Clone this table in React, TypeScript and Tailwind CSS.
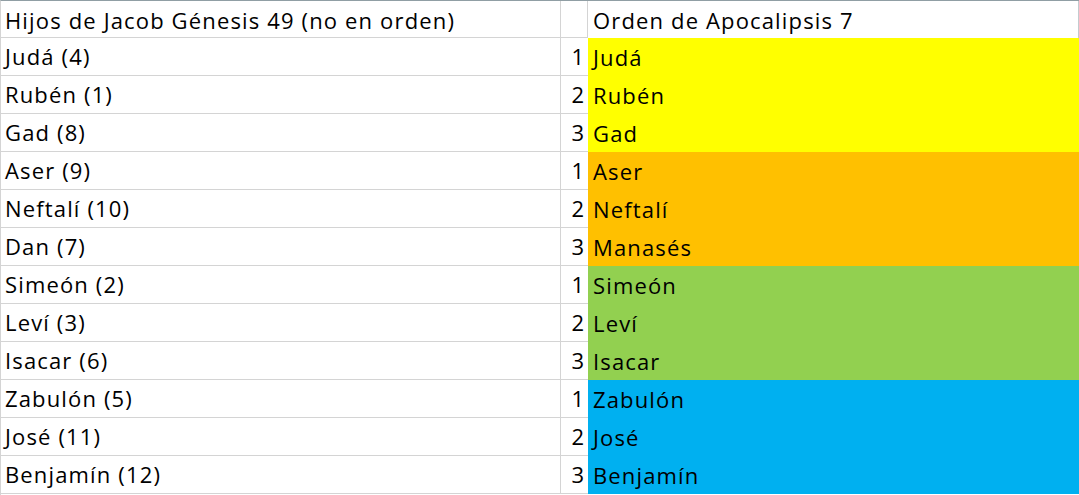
const rows: [string, string, string, string][] = [
  ["Judá (4)", "1", "Judá", "bg-[#ffff00]"],
  ["Rubén (1)", "2", "Rubén", "bg-[#ffff00]"],
  ["Gad (8)", "3", "Gad", "bg-[#ffff00]"],
  ["Aser (9)", "1", "Aser", "bg-[#ffc000]"],
  ["Neftalí (10)", "2", "Neftalí", "bg-[#ffc000]"],
  ["Dan (7)", "3", "Manasés", "bg-[#ffc000]"],
  ["Simeón (2)", "1", "Simeón", "bg-[#92d050]"],
  ["Leví (3)", "2", "Leví", "bg-[#92d050]"],
  ["Isacar (6)", "3", "Isacar", "bg-[#92d050]"],
  ["Zabulón (5)", "1", "Zabulón", "bg-[#00b0f0]"],
  ["José (11)", "2", "José", "bg-[#00b0f0]"],
  ["Benjamín (12)", "3", "Benjamín", "bg-[#00b0f0]"],
]

export default function App() {
  return (
    <div
      className="w-[1079px] h-[495px] bg-white text-black overflow-hidden border-t border-l border-t-[#909ea4] border-l-[#d4d4d4] text-[22px] leading-none tracking-[1.15px]"
      style={{ fontFamily: '"Open Sans", "Noto Sans", sans-serif' }}
    >
      <div className="flex h-[37px]">
        <div className="w-[560px] shrink-0 border-r border-b border-[#d4d4d4] pl-[4px] flex items-end pb-[6px]">
          Hijos de Jacob Génesis 49 (no en orden)
        </div>
        <div className="w-[27px] shrink-0 border-r border-b border-[#d4d4d4]" />
        <div className="flex-1 border-r border-[#c3cbcf] pl-[5px] flex items-end pb-[7px]">
          Orden de Apocalipsis 7
        </div>
      </div>
      {rows.map(([a, n, c, bg]) => (
        <div key={a} className="flex h-[38px]">
          <div className="w-[560px] shrink-0 border-r border-b border-[#d4d4d4] pl-[4px] flex items-end pb-[8px]">
            {a}
          </div>
          <div className="w-[27px] shrink-0 border-b border-[#d4d4d4] flex items-end justify-end pr-[4px] pb-[8px] tracking-normal">
            {n}
          </div>
          <div className={`flex-1 ${bg} pl-[5px] flex items-end pb-[8px]`}>{c}</div>
        </div>
      ))}
    </div>
  )
}
